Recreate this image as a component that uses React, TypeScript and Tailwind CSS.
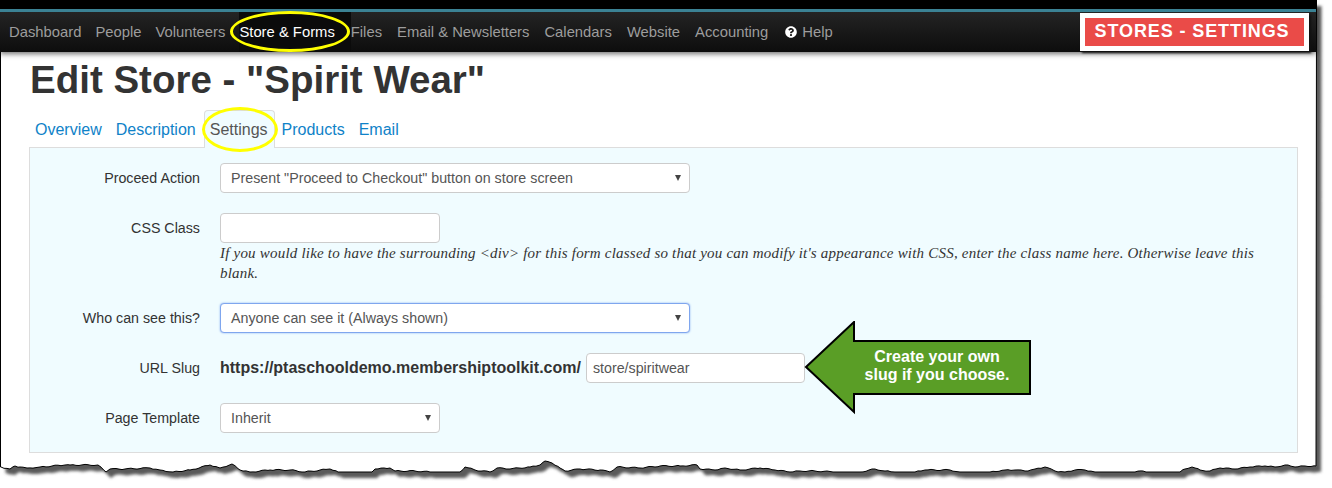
import React from 'react';
import { FaQuestionCircle } from 'react-icons/fa';

// torn bottom edge of the screenshot, read off the picture
const tear: [number, number][] = [
  [1, 467], [10, 469], [15, 466], [20, 467], [27, 468], [40, 467], [65, 465], [70, 465], [98, 465], [106, 472], [110, 469],
  [125, 469], [150, 468], [160, 470], [173, 472], [190, 470], [210, 465], [220, 468], [232, 464], [240, 470], [250, 472],
  [270, 470], [290, 470], [305, 472], [330, 469], [338, 472], [372, 472], [375, 469], [390, 468], [395, 471], [415, 471],
  [430, 472], [460, 472], [465, 467], [475, 470], [490, 472], [497, 468], [510, 469], [530, 467], [540, 465], [545, 461],
  [552, 463], [560, 468], [565, 471], [580, 469], [600, 470], [610, 472], [617, 467], [640, 468], [660, 466], [680, 466],
  [697, 465], [700, 469], [715, 470], [725, 468], [740, 470], [760, 468], [775, 470], [790, 472], [800, 471], [815, 471],
  [835, 472], [860, 472], [875, 469], [885, 471], [895, 472], [915, 472], [925, 470], [950, 470], [960, 472], [975, 472],
  [990, 472], [1005, 470], [1015, 470], [1025, 471], [1035, 469], [1045, 467], [1055, 471], [1065, 472], [1075, 470],
  [1085, 470], [1095, 472], [1120, 472], [1135, 472], [1143, 471], [1150, 472], [1180, 472], [1185, 469], [1192, 467],
  [1200, 470], [1210, 471], [1220, 468], [1235, 469], [1250, 467], [1265, 466], [1275, 467], [1285, 465], [1295, 467],
  [1305, 466], [1316, 466],
];

// break the long segments up a little so the edge looks ripped, not polygonal
const ragged = tear.flatMap(([x, y], i) => {
  const next = tear[i + 1];
  if (!next) return [`L${x} ${y}`];
  const out = [`L${x} ${y}`];
  for (let px = x + 3; px < next[0] - 1; px += 3) {
    const t = (px - x) / (next[0] - x);
    const flat = y === next[1] && y === 472;
    const wobble = flat ? 0 : Math.sin(px * 12.9898) * 0.6;
    out.push(`L${px} ${Math.min(472, y + (next[1] - y) * t + wobble).toFixed(1)}`);
  }
  return out;
});

const framePath = 'M0.5 0 L0.5 467 ' + ragged.join(' ') + ' L1316.5 0 Z';

function Field({ label, children }: { label: string; children: React.ReactNode }) {
  return (
    <div className="flex items-start gap-5">
      <label className="w-[170px] h-[30px] leading-[30px] text-right text-[14.25px] text-[#333]">{label}</label>
      {children}
    </div>
  );
}

function SelectBox({ text, width, focused }: { text: string; width: string; focused?: boolean }) {
  return (
    <div
      className={`relative h-[30px] ${width} bg-white rounded-[4px] border pl-[10px] leading-[28px] text-[14.25px] text-[#555] ${
        focused ? 'border-[#7fa6ee] shadow-[0_0_2px_#7fa6ee]' : 'border-[#ccc]'
      }`}
    >
      {text}
      <span className="absolute right-[8px] top-[11px] w-0 h-0 border-x-[3.5px] border-x-transparent border-t-[6px] border-t-[#444]" />
    </div>
  );
}

export default function App() {
  const navItems = ['Files', 'Email & Newsletters', 'Calendars', 'Website', 'Accounting'];

  return (
    <div className="relative w-[1332px] h-[488px] overflow-hidden bg-white font-['Liberation_Sans',Arial,sans-serif]">
      {/* paper edge and its drop shadow */}
      <svg className="absolute inset-0" width="1332" height="488">
        <defs>
          <filter id="soft" x="-2%" y="-2%" width="104%" height="104%">
            <feGaussianBlur stdDeviation="1.6" />
          </filter>
        </defs>
        <path d={framePath} transform="translate(5 6)" fill="#5a5a5a" filter="url(#soft)" />
        <path d={framePath} fill="#fff" stroke="#000" strokeWidth="1" />
      </svg>

      <div className="relative w-[1316px]">
        <div className="h-[9px] bg-black" />
        <nav className="relative flex h-[43px] border-t-[3px] border-[#3b8294] bg-gradient-to-b from-[#242424] to-[#0d0d0d] shadow-[0_2px_5px_rgba(0,0,0,0.55)] pl-[9px] text-[14.8px] text-[#9d9d9d]">
          <a className="mr-[14px] leading-[40px]">Dashboard</a>
          <a className="mr-[14px] leading-[40px]">People</a>
          <a className="mr-[14px] leading-[40px]">Volunteers</a>
          <a className="pr-[16px] leading-[40px] bg-[#0b0b0b] text-white">Store &amp; Forms</a>
          {navItems.map((n) => (
            <a key={n} className="mr-[15px] leading-[40px]">
              {n}
            </a>
          ))}
          <a className="ml-[2px] flex items-center gap-[5px] leading-[40px]">
            <FaQuestionCircle className="text-[12px] text-white" />
            Help
          </a>
          <div className="absolute right-[7px] top-[1px] h-[38px] w-[229px] border-[5px] border-white bg-[#ea4b48] pr-[5px] text-center text-[18px] font-bold leading-[26px] tracking-[0.9px] text-white shadow-[2px_2px_2px_#111]">
            STORES - SETTINGS
          </div>
        </nav>

        <main className="pl-[29px]">
          <h1 className="ml-px mt-2 mb-[10px] h-10 text-[38.5px] font-bold leading-10 text-[#333]">Edit Store - "Spirit Wear"</h1>

          <div className="relative z-10 -mb-px flex h-[38px] text-[16px] text-[#0f82c8]">
            <a className="border border-transparent pl-[5px] pr-[6px] leading-[38px]">Overview</a>
            <a className="border border-transparent pl-[6px] pr-[7px] leading-[38px]">Description</a>
            <a className="rounded-t-[4px] border border-b-0 border-[#ddd] bg-[#f0fcff] pl-[5px] pr-[6px] leading-[38px] text-[#555]">Settings</a>
            <a className="border border-transparent px-[6px] leading-[38px]">Products</a>
            <a className="border border-transparent px-[6px] leading-[38px]">Email</a>
          </div>

          <section className="relative flex h-[306px] w-[1269px] flex-col gap-5 border border-[#ddd] bg-[#f0fcff] pt-[15px]">
            <Field label="Proceed Action">
              <SelectBox text={'Present "Proceed to Checkout" button on store screen'} width="w-[470px]" />
            </Field>

            <Field label="CSS Class">
              <div className="w-[1050px]">
                <div className="h-[30px] w-[220px] rounded-[4px] border border-[#ccc] bg-white" />
                <p className="font-['Liberation_Serif',Georgia,serif] text-[15px] italic leading-[20px] tracking-[0.205px] text-[#333]">
                  If you would like to have the surrounding &lt;div&gt; for this form classed so that you can modify it's appearance with CSS, enter the class name here. Otherwise leave this blank.
                </p>
              </div>
            </Field>

            <Field label="Who can see this?">
              <SelectBox text="Anyone can see it (Always shown)" width="w-[470px]" focused />
            </Field>

            <Field label="URL Slug">
              <div className="flex items-center gap-[5px]">
                <span className="text-[16px] font-bold leading-[28px] text-[#333]">https://ptaschooldemo.membershiptoolkit.com/</span>
                <div className="h-[30px] w-[219px] rounded-[4px] border border-[#ccc] bg-white pl-[6px] text-[14.25px] leading-[28px] text-[#555]">store/spiritwear</div>
              </div>
            </Field>

            <Field label="Page Template">
              <SelectBox text="Inherit" width="w-[220px]" />
            </Field>

            {/* callout arrow */}
            <div className="absolute left-[774px] top-[173px] h-[94px] w-[230px] text-center text-[16px] font-bold leading-[18px] text-white">
              <svg className="absolute inset-0" width="230" height="94">
                <polygon points="2,46 50,1 50,20 226,20 226,73 50,73 50,91" fill="#5a9e26" stroke="#000" strokeWidth="2" />
              </svg>
              <div className="relative pl-[36px] pt-[27px]">
                Create your own
                <br />
                slug if you choose.
              </div>
            </div>
          </section>
        </main>

        {/* yellow hand-drawn circles */}
        <div className="absolute left-[230px] top-[11px] h-[41px] w-[120px] rounded-[50%] border-[3px] border-[#ffff00]" />
        <div className="absolute left-[202px] top-[107px] z-20 h-[45px] w-[76px] rounded-[50%] border-[3px] border-[#ffff00]" />
      </div>
    </div>
  );
}
